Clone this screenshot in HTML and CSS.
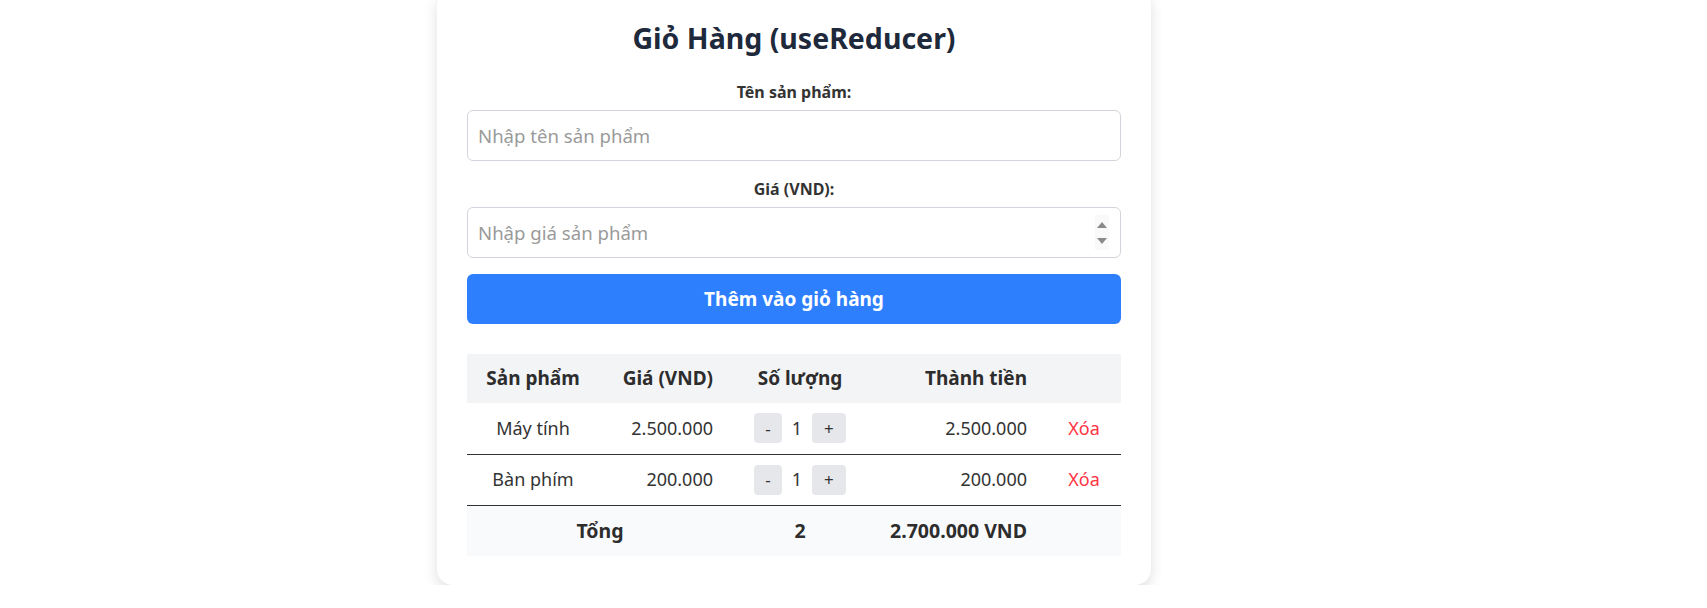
FILE: index.html
```html
<!DOCTYPE html>
<html lang="vi">
<head>
<meta charset="utf-8">
<title>Giỏ Hàng</title>
<link rel="stylesheet" href="styles.css">
</head>
<body>
<div class="page">
  <div class="card">
    <h2 class="title">Giỏ Hàng (useReducer)</h2>
    <div class="field">
      <label class="label">Tên sản phẩm:</label>
      <div class="input-box"><input class="input" type="text" placeholder="Nhập tên sản phẩm"></div>
    </div>
    <div class="field">
      <label class="label">Giá (VND):</label>
      <div class="input-box">
        <input class="input" type="text" placeholder="Nhập giá sản phẩm">
        <span class="spinner"><span class="tri-up"></span><span class="tri-down"></span></span>
      </div>
    </div>
    <button class="add-btn">Thêm vào giỏ hàng</button>
    <table class="cart">
      <colgroup>
        <col class="c1"><col class="c2"><col class="c3"><col class="c4"><col class="c5">
      </colgroup>
      <thead>
        <tr>
          <th class="center">Sản phẩm</th>
          <th class="right">Giá (VND)</th>
          <th class="center">Số lượng</th>
          <th class="right">Thành tiền</th>
          <th></th>
        </tr>
      </thead>
      <tbody>
        <tr>
          <td class="center">Máy tính</td>
          <td class="right">2.500.000</td>
          <td class="center"><div class="qty"><button class="qbtn">-</button><span class="qnum">1</span><button class="qbtn plus">+</button></div></td>
          <td class="right">2.500.000</td>
          <td class="center"><span class="del">Xóa</span></td>
        </tr>
        <tr>
          <td class="center">Bàn phím</td>
          <td class="right">200.000</td>
          <td class="center"><div class="qty"><button class="qbtn">-</button><span class="qnum">1</span><button class="qbtn plus">+</button></div></td>
          <td class="right">200.000</td>
          <td class="center"><span class="del">Xóa</span></td>
        </tr>
      </tbody>
      <tfoot>
        <tr>
          <td class="center" colspan="2">Tổng</td>
          <td class="center">2</td>
          <td class="right">2.700.000 VND</td>
          <td></td>
        </tr>
      </tfoot>
    </table>
  </div>
</div>
</body>
</html>
```

FILE: styles.css
```css
* { box-sizing: border-box; }
html, body { margin: 0; padding: 0; background: #ffffff; }
body {
  font-family: "Noto Sans", "Open Sans", sans-serif;
  color: #333333;
  overflow: hidden;
}
.page {
  display: flex;
  padding-left: 437px;
  margin-top: -10px;
}
.card {
  width: 714px;
  background: #ffffff;
  border-radius: 16px;
  box-shadow: 0 5px 14px rgba(0, 0, 0, 0.13);
  padding: 30px 30px 29px 30px;
}
.title {
  margin: 0 0 24px 0;
  font-size: 28.5px;
  line-height: 36px;
  font-weight: 700;
  text-align: center;
  color: #1e293b;
}
.field {
  display: flex;
  flex-direction: column;
  margin-bottom: 16px;
}
.label {
  font-size: 16px;
  line-height: 24px;
  font-weight: 700;
  text-align: center;
  color: #333333;
  margin-bottom: 6px;
}
.input-box {
  display: flex;
  align-items: center;
  height: 51px;
  border: 1px solid #d1d5db;
  border-radius: 6px;
  background: #fff;
  padding: 0 11px 0 10px;
}
.input {
  flex: 1;
  border: none;
  outline: none;
  font-family: inherit;
  font-size: 18.6px;
  color: #333;
  padding: 0;
  background: transparent;
}
.input::placeholder { color: #9a9a9a; }
.spinner {
  display: flex;
  flex-direction: column;
  align-items: center;
  justify-content: center;
  gap: 10px;
  width: 14px;
  height: 35px;
  background: #f9f9f9;
}
.tri-up {
  width: 0; height: 0;
  border-left: 5px solid transparent;
  border-right: 5px solid transparent;
  border-bottom: 6px solid #8a8a8a;
}
.tri-down {
  width: 0; height: 0;
  border-left: 5px solid transparent;
  border-right: 5px solid transparent;
  border-top: 6px solid #8a8a8a;
}
.add-btn {
  display: block;
  width: 100%;
  height: 50px;
  border: none;
  border-radius: 6px;
  background: #2e7ffe;
  color: #ffffff;
  font-family: inherit;
  font-size: 19px;
  font-weight: 700;
  margin-bottom: 30px;
}
.cart {
  width: 654px;
  border-collapse: collapse;
  table-layout: fixed;
  font-size: 18px;
}
.c1 { width: 132px; }
.c2 { width: 134px; }
.c3 { width: 134px; }
.c4 { width: 180px; }
.c5 { width: 74px; }
.cart th {
  background: #f3f4f6;
  font-weight: 700;
  font-size: 19px;
  height: 49px;
  padding: 0 20px;
  line-height: 25px;
  color: #2d2d2d;
}
.cart tbody td {
  height: 51px;
  padding: 0 20px;
  border-bottom: 1px solid #333;
  line-height: 25px;
  color: #333;
}
.cart tfoot td {
  height: 51px;
  padding: 0 20px;
  background: #f9fafb;
  font-weight: 700;
  font-size: 19.5px;
  color: #2d2d2d;
}
.center { text-align: center; }
.right { text-align: right; }
.cart td.center, .cart th.center { padding: 0 4px; }
.qty {
  display: flex;
  align-items: center;
  justify-content: center;
}
.qbtn {
  height: 30px;
  border: none;
  border-radius: 4px;
  background: #e5e7eb;
  color: #333;
  font-family: inherit;
  font-size: 17px;
  padding: 0 11px;
}
.qbtn.plus { padding: 0 12px; }
.qnum {
  margin: 0 10px;
}
.del {
  color: #ff3344;
}
```
